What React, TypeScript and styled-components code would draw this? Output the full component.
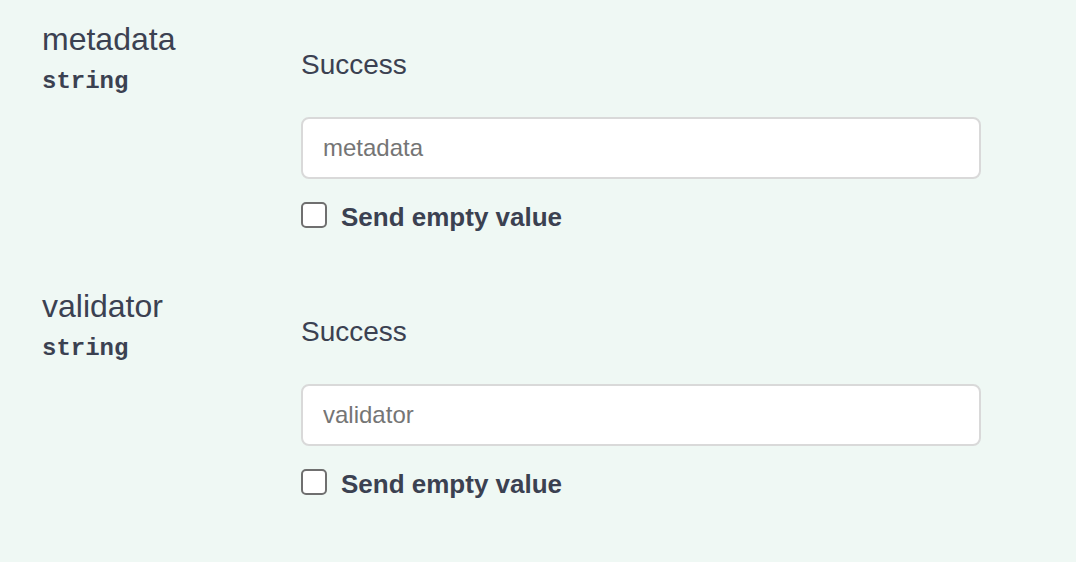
import styled, { createGlobalStyle } from "styled-components";

const GlobalStyle = createGlobalStyle`
  html, body {
    margin: 0;
    padding: 0;
    background: #eff8f4;
  }
  body {
    font-family: "Liberation Sans", Arial, sans-serif;
    color: #3b4151;
  }
`;

const Table = styled.div`
  width: 1076px;
  min-height: 562px;
  background: #eff8f4;
`;

const Row = styled.div`
  display: grid;
  grid-template-columns: 259px 680px;
  padding: 21px 0 35px 42px;
`;

const NameCell = styled.div`
  display: flex;
  flex-direction: column;
`;

const ParamName = styled.div`
  font-size: 32px;
  line-height: 36px;
  color: #3b4151;
`;

const ParamType = styled.div`
  margin-top: 11px;
  font-family: "Liberation Mono", "Courier New", monospace;
  font-weight: 700;
  font-size: 24px;
  line-height: 28px;
  color: #3b4151;
`;

const DescCell = styled.div`
  display: flex;
  flex-direction: column;
  margin-top: 28px;
`;

const Description = styled.p`
  margin: 0 0 36px;
  font-size: 28px;
  line-height: 32px;
  color: #3b4151;
`;

const TextInput = styled.input`
  box-sizing: border-box;
  width: 680px;
  height: 62px;
  margin: 0;
  padding: 0 20px;
  border: 2px solid #d9d9d9;
  border-radius: 8px;
  background: #fff;
  font-family: "Liberation Sans", Arial, sans-serif;
  font-size: 24px;
  color: #3b4151;
  outline: none;

  &::placeholder {
    color: #757575;
  }
`;

const EmptyLabel = styled.label`
  display: flex;
  align-items: flex-start;
  gap: 14px;
  margin-top: 23px;
  font-size: 26px;
  font-weight: 700;
  line-height: 30px;
  color: #3b4151;
`;

const Checkbox = styled.input.attrs({ type: "checkbox" })`
  appearance: none;
  box-sizing: border-box;
  width: 26px;
  height: 26px;
  margin: 0;
  border: 2px solid #6f6f6f;
  border-radius: 5px;
  background: #fff;
`;

const params = [
  { name: "metadata", type: "string" },
  { name: "validator", type: "string" },
];

function App() {
  return (
    <>
      <GlobalStyle />
      <Table>
        {params.map((p) => (
          <Row key={p.name}>
            <NameCell>
              <ParamName>{p.name}</ParamName>
              <ParamType>{p.type}</ParamType>
            </NameCell>
            <DescCell>
              <Description>Success</Description>
              <TextInput placeholder={p.name} />
              <EmptyLabel>
                <Checkbox />
                Send empty value
              </EmptyLabel>
            </DescCell>
          </Row>
        ))}
      </Table>
    </>
  );
}

export default App;
